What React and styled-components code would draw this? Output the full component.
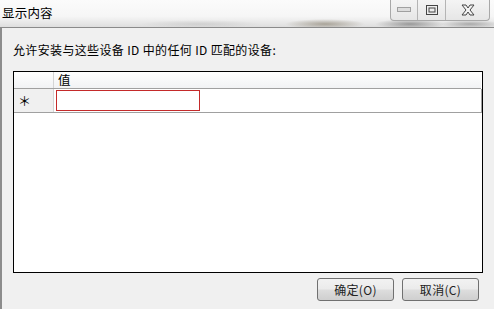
import React from "react";
import styled, { createGlobalStyle } from "styled-components";

const Global = createGlobalStyle`
  html, body { margin: 0; padding: 0; }
  body {
    width: 494px; height: 309px; overflow: hidden;
    font-family: "Noto Sans CJK SC", "Noto Sans", sans-serif;
    font-size: 12px; color: #000;
    background: #f0f0f0;
  }
`;

const Window = styled.div`
  width: 494px;
  height: 309px;
  display: flex;
  flex-direction: column;
  background: #f0f0f0;
`;

const TitleBar = styled.div`
  height: 27px;
  flex: none;
  position: relative;
  display: flex;
  align-items: flex-start;
  justify-content: space-between;
  background:
    radial-gradient(ellipse 40px 5px at 325px 24px, rgba(120,110,90,0.55), transparent),
    radial-gradient(ellipse 35px 5px at 410px 24px, rgba(90,90,90,0.55), transparent),
    radial-gradient(ellipse 30px 4px at 470px 24px, rgba(110,110,110,0.5), transparent),
    radial-gradient(ellipse 60px 4px at 200px 24px, rgba(170,170,170,0.35), transparent),
    linear-gradient(#fbfbfb, #f6f6f6 60%, #dedede);
  border-bottom: 1px solid #8a8a8a;
`;

const Title = styled.div`
  padding: 5px 0 0 2px;
  font-size: 12.5px;
  line-height: 16px;
  letter-spacing: 0.2px;
`;

const Controls = styled.div`
  display: flex;
  margin-right: 4px;
  height: 20px;
  border: 1px solid #a8a8a8;
  border-top: none;
  border-radius: 0 0 4px 4px;
  background: linear-gradient(#f4f4f4, #e6e6e6);
  overflow: hidden;
`;

const CtrlBtn = styled.div`
  width: ${p => p.$w}px;
  display: flex;
  align-items: center;
  justify-content: center;
  border-left: ${p => (p.$first ? "none" : "1px solid #b4b4b4")};
`;

const Client = styled.div`
  flex: 1;
  border-left: 2px solid #8c8c8c;
  display: flex;
  flex-direction: column;
  padding: 12px 0 0 11px;
`;

const Prompt = styled.div`
  height: 20px;
  line-height: 20px;
  letter-spacing: 0.35px;
  font-size: 12px;
  margin-bottom: 11px;
`;

const Grid = styled.div`
  width: 468px;
  height: 200px;
  border: 1px solid #000;
  background: #fff;
  display: flex;
  flex-direction: column;
`;

const HeaderRow = styled.div`
  display: flex;
  height: 16px;
  width: 467px;
  border-bottom: 1px solid #a0a0a0;
  background: linear-gradient(#ffffff, #f1f2f4);
`;

const RowHeadCell = styled.div`
  width: 40px;
  flex: none;
  border-right: 1px solid #d5d5d5;
  background: ${p => (p.$body ? "#f0f0f0" : "transparent")};
  display: flex;
  align-items: center;
  padding-left: 4px;
  box-sizing: border-box;
  font-size: 13px;
`;

const HeadCell = styled.div`
  flex: 1;
  padding-left: 4px;
  line-height: 16px;
  font-size: 12.5px;
`;

const DataRow = styled.div`
  display: flex;
  height: 23px;
  width: 467px;
  border-bottom: 1px solid #a0a0a0;
  border-right: 1px solid #a0a0a0;
  box-sizing: content-box;
`;

const CellArea = styled.div`
  flex: 1;
  display: flex;
  align-items: center;
  padding-left: 2px;
`;

const Input = styled.div`
  width: 144px;
  height: 21px;
  border: 1px solid #c42a2a;
  background: #fff;
  box-sizing: border-box;
`;

const Footer = styled.div`
  display: flex;
  justify-content: flex-end;
  gap: 8px;
  padding: 5px 15px 0 0;
`;

const Button = styled.div`
  width: 77px;
  height: 23px;
  box-sizing: border-box;
  border: 1px solid #707070;
  border-radius: 3px;
  background: linear-gradient(#f2f2f2 0%, #ebebeb 48%, #dddddd 52%, #cfcfcf 100%);
  display: flex;
  align-items: center;
  justify-content: center;
  font-size: 12px;
  letter-spacing: 0.3px;
  color: #222;
`;

export default function App() {
  return (
    <>
      <Global />
      <Window>
        <TitleBar>
          <Title>显示内容</Title>
          <Controls>
            <CtrlBtn $w={26} $first>
              <svg width="14" height="6" viewBox="0 0 14 6">
                <rect x="0.5" y="0.5" width="13" height="4" fill="#ddd" stroke="#a0a0a0" />
              </svg>
            </CtrlBtn>
            <CtrlBtn $w={27}>
              <svg width="12" height="10" viewBox="0 0 12 10">
                <rect x="0.5" y="0.5" width="11" height="9" fill="none" stroke="#444" />
                <rect x="3" y="3" width="6" height="4" fill="none" stroke="#444" />
              </svg>
            </CtrlBtn>
            <CtrlBtn $w={43}>
              <svg width="14" height="12" viewBox="0 0 14 12">
                <path d="M1 1 L5 1 L7 4 L9 1 L13 1 L9 6 L13 11 L9 11 L7 8 L5 11 L1 11 L5 6 Z" fill="#f4f4f4" stroke="#444" strokeWidth="1" strokeLinejoin="round" />
              </svg>
            </CtrlBtn>
          </Controls>
        </TitleBar>
        <Client>
          <Prompt>允许安装与这些设备 ID 中的任何 ID 匹配的设备:</Prompt>
          <Grid>
            <HeaderRow>
              <RowHeadCell />
              <HeadCell>值</HeadCell>
            </HeaderRow>
            <DataRow>
              <RowHeadCell $body>＊</RowHeadCell>
              <CellArea>
                <Input />
              </CellArea>
            </DataRow>
          </Grid>
          <Footer>
            <Button>确定(O)</Button>
            <Button>取消(C)</Button>
          </Footer>
        </Client>
      </Window>
    </>
  );
}
